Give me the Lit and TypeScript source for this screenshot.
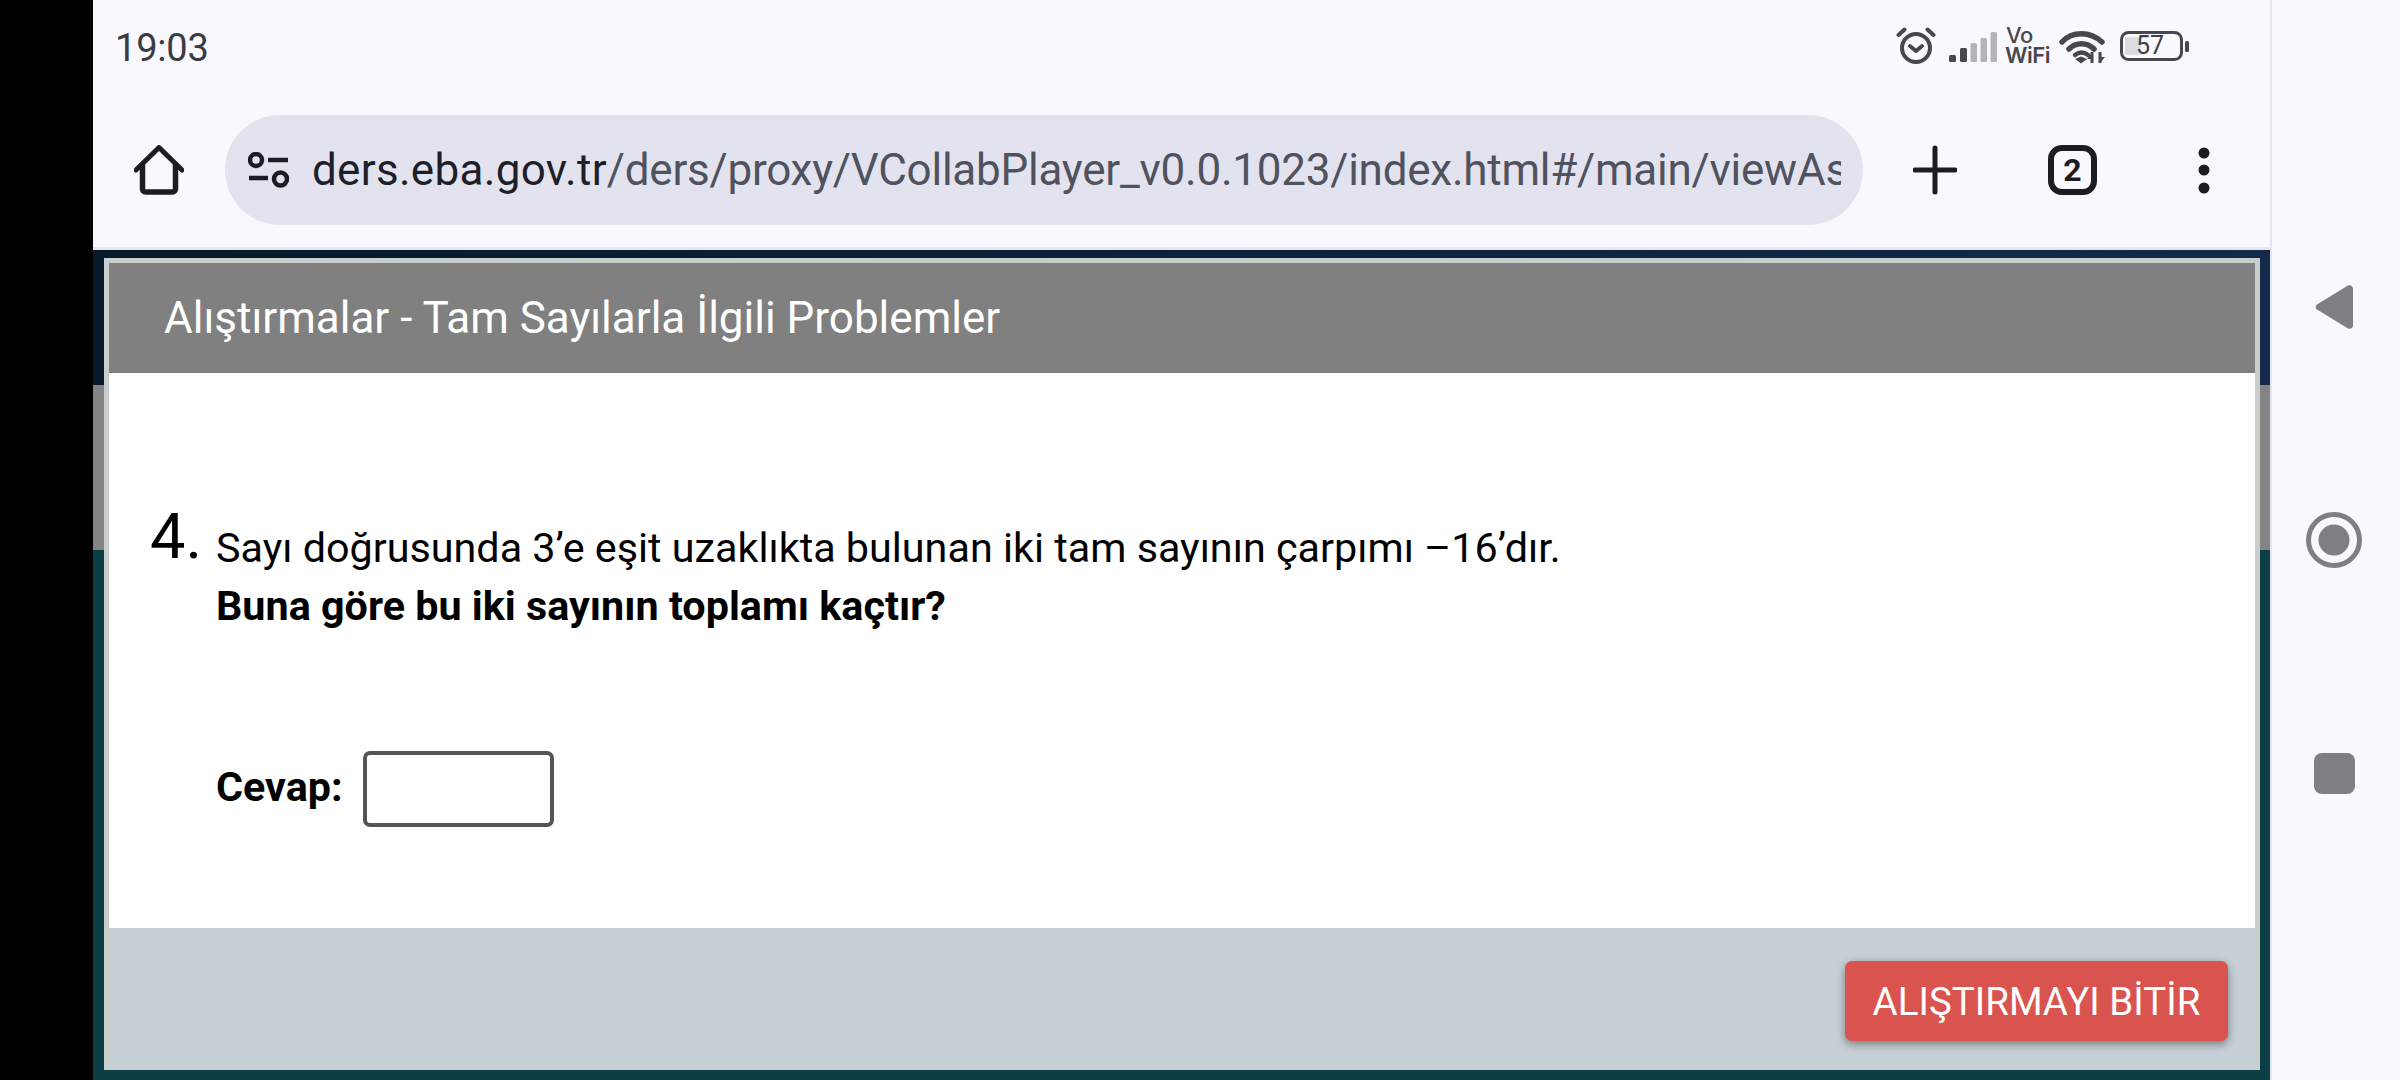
import { LitElement, html, css } from "lit";
import { customElement } from "lit/decorators.js";

@customElement("app-root")
export class AppRoot extends LitElement {
  static styles = css`
    :host { display: block; width: 2400px; height: 1080px; overflow: hidden; font-family: Roboto, "Liberation Sans", sans-serif; }
    * { box-sizing: border-box; }
    .screen { display: grid; grid-template-columns: 93px 2177px 130px; height: 1080px; background: #000; }
    .app { display: flex; flex-direction: column; height: 1080px; min-width: 0; }
    .chrome { height: 250px; background: #f8f8fe; border-bottom: 3px solid #e5e6f0; display: flex; flex-direction: column; }
    .status { height: 115px; display: flex; justify-content: space-between; padding: 22px 81px 0 22px; flex: none; }
    .time { font-size: 38px; line-height: 52px; color: #3a3b42; letter-spacing: -0.2px; }
    .sicons { display: flex; align-items: flex-start; margin-top: 5px; }
    .sicons svg { display: block; flex: none; }
    .vo { width: 44px; margin: -2px 10px 0 8px; font-family: Inter, Roboto, sans-serif; font-size: 22px; line-height: 20px; color: #47484e; text-align: center; white-space: nowrap; }
    .vo span { display: block; letter-spacing: -0.5px; font-weight: 600; }
    .vo span:first-child { font-weight: 500; text-align: left; padding-left: 1px; }
    .bat { position: relative; width: 69px; height: 30px; margin: 4px 0 0 15px; }
    .bat span { position: absolute; left: 16px; top: 0; font-size: 25px; line-height: 30px; color: #3e3f46; }
    .toolbar { height: 110px; display: flex; align-items: center; flex: none; }
    .home { width: 132px; display: flex; justify-content: flex-start; padding-left: 41px; }
    .pill { width: 1638px; height: 110px; border-radius: 55px; background: #e2e3ee; display: flex; align-items: center; padding: 0 22px 0 23px; gap: 22px; flex: none; }
    .url { flex: 1; min-width: 0; overflow: hidden; white-space: nowrap; font-size: 44px; line-height: 60px; color: #50525e; letter-spacing: -0.24px; }
    .url b { font-weight: 400; color: #1e1f28; letter-spacing: 0.3px; }
    .plus { margin-left: 50px; }
    .tabs { margin-left: 91px; width: 49px; height: 50px; border: 6px solid #1c1d24; border-radius: 14px; display: flex; align-items: center; justify-content: center; font-size: 32px; font-weight: 700; color: #1c1d24; line-height: 1; }
    .dots { margin-left: 101px; }
    .stage { flex: 1; display: flex; flex-direction: column; padding: 8px 10px 10px 11px;
      background:
        linear-gradient(to right, #071a2b, #12294a) top / 100% 135px no-repeat,
        linear-gradient(#848484, #848484) 0 135px / 100% 165px no-repeat,
        #0b3e45; }
    .frame { flex: 1; display: flex; flex-direction: column; border: 5px solid #c9cdcb; border-bottom: 0; background: #c6cfd5; }
    .head { height: 110px; flex: none; background: #808080; color: #fff; font-size: 44px; line-height: 110px; padding-left: 55px; white-space: nowrap; }
    .body { height: 555px; flex: none; background: #fff; padding: 127px 0 0 41px; color: #000; }
    .q { display: flex; align-items: flex-start; }
    .num { width: 66px; font-size: 63px; font-weight: 400; line-height: 74px; flex: none; }
    .lines { padding-top: 19px; font-size: 41.300px; line-height: 58px; white-space: nowrap; }
    .lines strong { font-weight: 700; }
    .answer { display: flex; align-items: center; gap: 20px; margin: 116px 0 0 66px; font-size: 41.300px; font-weight: 700; }
    .answer span { padding-bottom: 5px; }
    .box { width: 191px; height: 76px; border: 4px solid #555; border-radius: 7px; background: #fff; }
    .foot { flex: 1; display: flex; justify-content: flex-end; align-items: flex-start; padding: 33px 27px 0 0; background: #c6cfd5; }
    .btn { width: 383px; height: 80px; background: #d9534f; border: 0; border-radius: 7px; color: #fff; font-family: Roboto, sans-serif; font-size: 38.500px; line-height: 82px; padding: 0; box-shadow: 0 3px 8px rgba(0,0,0,.4); white-space: nowrap; text-align: center; }
    .nav { background: #f8f8fe; border-left: 2px solid #e5e6f0; display: flex; flex-direction: column; align-items: center; padding: 284px 4px 0 0; }
    .nav svg { display: block; }
  `;

  render() {
    return html`<div class="screen">
      <div></div>
      <div class="app">
        <div class="chrome">
          <div class="status">
            <div class="time">19:03</div>
            <div class="sicons">
              <svg width="40" height="37" viewBox="0 0 40 37" fill="none" stroke="#47484e" stroke-width="4" stroke-linecap="round" stroke-linejoin="round">
                <circle cx="20" cy="21" r="14"/><path d="M14 19l6 5 6-5"/><path d="M2.500 8l6-5.500M37.500 8l-6-5.500"/>
              </svg>
              <svg style="margin:5px 0 0 13px" width="48" height="30" viewBox="0 0 48 30">
                <rect x="0" y="23" width="7" height="7" rx="1.500" fill="#47484e"/>
                <rect x="11" y="16" width="7" height="14" rx="1.500" fill="#47484e"/>
                <rect x="21.500" y="11" width="6.500" height="19" rx="1.500" fill="#b3b4ba"/>
                <rect x="31.500" y="6" width="6.500" height="24" rx="1.500" fill="#b3b4ba"/>
                <rect x="41.500" y="0" width="6.500" height="30" rx="1.500" fill="#b3b4ba"/>
              </svg>
              <div class="vo"><span>Vo</span><span>WiFi</span></div>
              <svg style="margin-top:3px" width="46" height="34" viewBox="0 0 46 34" fill="none" stroke="#47484e" stroke-width="5.500" stroke-linecap="round">
                <path d="M3 12C13 1 31 1 43 12"/><path d="M10 19c7-7 18-7 25 0"/><path d="M16 25c4-3 9-3 13 0" stroke-width="4.500"/>
                <path d="M16 29l6-2.500 6 2.500-6 4.500z" fill="#47484e" stroke="none"/>
                <path d="M33 22v11M41 22v11" stroke-width="3" stroke-linecap="butt"/><path d="M33 23l-5 6h5zM41 33l5-6h-5z" fill="#47484e" stroke="none"/>
              </svg>
              <div class="bat">
                <svg width="69" height="30" viewBox="0 0 69 30" fill="none">
                  <rect x="5" y="6" width="16" height="18" fill="#dcdde3"/>
                  <rect x="1.500" y="1.500" width="60" height="27" rx="7" stroke="#47484e" stroke-width="3"/>
                  <rect x="65" y="10" width="4" height="11" rx="1.500" fill="#47484e"/>
                </svg>
                <span>57</span>
              </div>
            </div>
          </div>
          <div class="toolbar">
            <div class="home">
              <svg width="50" height="50" viewBox="0 0 50 50" fill="none" stroke="#1c1d24" stroke-width="5" stroke-linecap="round" stroke-linejoin="round">
                <path d="M2 25L25 2.500 48 25"/><path d="M8.500 20v24a3 3 0 0 0 3 3h27a3 3 0 0 0 3-3V20" stroke-width="5.500"/>
              </svg>
            </div>
            <div class="pill">
              <svg width="42" height="36" viewBox="0 0 42 36" fill="none" stroke="#1c1d24" stroke-width="4.500">
                <circle cx="8" cy="8" r="6"/><circle cx="32.500" cy="27" r="6.500"/><path d="M20 8h20M1 26h19"/>
              </svg>
              <div class="url"><b>ders.eba.gov.tr</b>/ders/proxy/VCollabPlayer_v0.0.1023/index.html#/main/viewAssessment</div>
            </div>
            <svg class="plus" width="44" height="50" viewBox="0 0 44 50" stroke="#1c1d24" stroke-width="5" stroke-linecap="round"><path d="M22 3v44M2 25h40"/></svg>
            <div class="tabs">2</div>
            <svg class="dots" width="12" height="50" viewBox="0 0 12 50" fill="#1c1d24"><circle cx="6" cy="8" r="5.500"/><circle cx="6" cy="25" r="5.500"/><circle cx="6" cy="43" r="5.500"/></svg>
          </div>
        </div>
        <div class="stage">
          <div class="frame">
            <div class="head">Alıştırmalar - Tam Sayılarla İlgili Problemler</div>
            <div class="body">
              <div class="q">
                <div class="num">4.</div>
                <div class="lines">
                  <div>Sayı doğrusunda 3’e eşit uzaklıkta bulunan iki tam sayının çarpımı –16’dır.</div>
                  <strong>Buna göre bu iki sayının toplamı kaçtır?</strong>
                </div>
              </div>
              <div class="answer"><span>Cevap:</span><div class="box"></div></div>
            </div>
            <div class="foot"><button class="btn">ALIŞTIRMAYI BİTİR</button></div>
          </div>
        </div>
      </div>
      <div class="nav">
        <svg width="40" height="46" viewBox="0 0 40 46" fill="#7e7e84"><path d="M3 20.500 34 1.500a3.500 3.500 0 0 1 5 3v37a3.500 3.500 0 0 1-5 3L3 25.500a3 3 0 0 1 0-5z"/></svg>
        <svg style="margin-top:182px" width="56" height="56" viewBox="0 0 56 56" fill="none"><circle cx="28" cy="28" r="25.500" stroke="#7e7e84" stroke-width="5"/><circle cx="28" cy="28" r="15.500" fill="#7e7e84"/></svg>
        <svg style="margin-top:185px" width="41" height="41" viewBox="0 0 41 41"><rect width="41" height="41" rx="8" fill="#7e7e84"/></svg>
      </div>
    </div>`;
  }
}
